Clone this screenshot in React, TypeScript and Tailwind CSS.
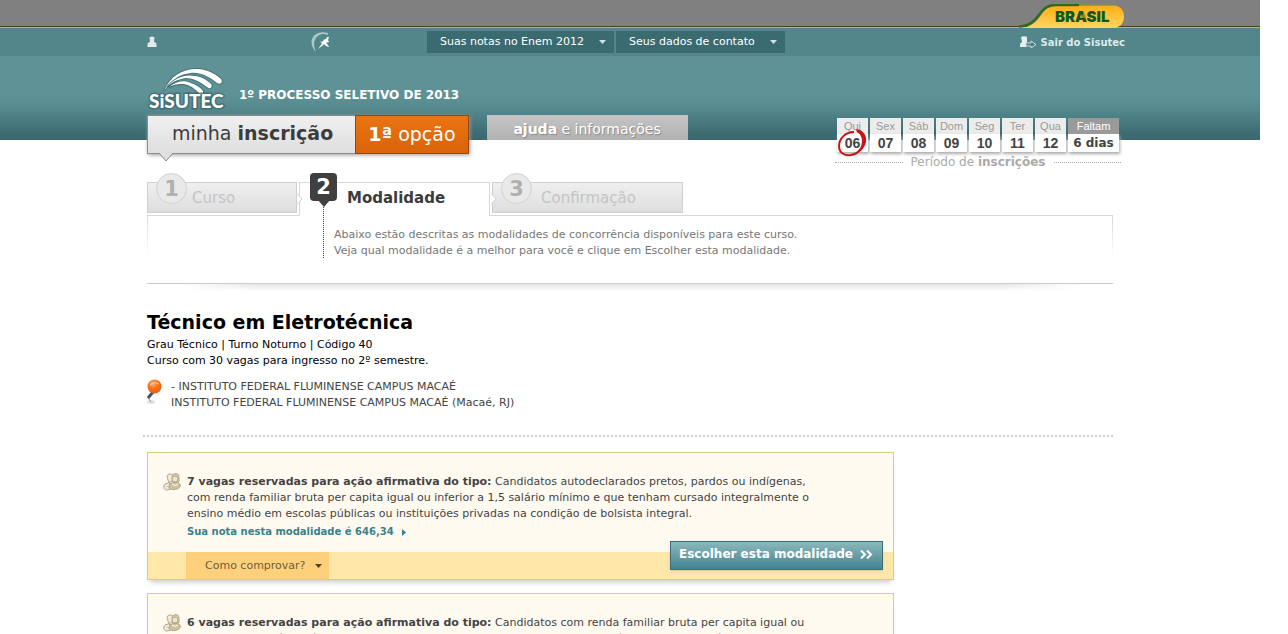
import React from "react";

interface Day {
  week: string;
  day: string;
}

const days: Day[] = [
  { week: "Qui", day: "06" },
  { week: "Sex", day: "07" },
  { week: "Sáb", day: "08" },
  { week: "Dom", day: "09" },
  { week: "Seg", day: "10" },
  { week: "Ter", day: "11" },
  { week: "Qua", day: "12" },
];

interface Modality {
  id: number;
  title: string;
  description: string;
  score: string;
}

const modalities: Modality[] = [
  {
    id: 1,
    title: "7 vagas reservadas para ação afirmativa do tipo:",
    description:
      "Candidatos autodeclarados pretos, pardos ou indígenas, com renda familiar bruta per capita igual ou inferior a 1,5 salário mínimo e que tenham cursado integralmente o ensino médio em escolas públicas ou instituições privadas na condição de bolsista integral.",
    score: "646,34",
  },
  {
    id: 2,
    title: "6 vagas reservadas para ação afirmativa do tipo:",
    description:
      "Candidatos com renda familiar bruta per capita igual ou inferior a 1,5 salário mínimo e que tenham cursado integralmente o ensino médio em escolas públicas ou instituições privadas na condição de bolsista integral.",
    score: "646,34",
  },
];

const BrasilBadge: React.FC = () => (
  <svg width="106" height="24" viewBox="0 0 106 24" aria-label="Brasil" role="img">
    <defs>
      <linearGradient id="badge" x1="0" y1="0" x2="0" y2="1">
        <stop offset="0" stopColor="#ffae12" />
        <stop offset="1" stopColor="#ffd562" />
      </linearGradient>
    </defs>
    <path
      d="M0 24C14 23 18 17 23 10C27 4 31 1.500 37 1.500H94C101 1.500 105 6 105 12.500C105 19 101 24 94 24Z"
      fill="url(#badge)"
    />
    <path d="M0 22.500C12 22 16 16 21 9.500C25 3.500 30 1 37 1H60" fill="none" stroke="#2f6b1c" strokeWidth="2.500" />
    <path d="M60 1H94" stroke="#8a9a1c" strokeWidth="1" />
    <text x="36" y="18" fontSize="15" fontWeight="900" fontFamily="Inter, sans-serif" fill="#0d5a1d">
      BRASIL
    </text>
    <path d="M62 14l3-6 3 6z" fill="#d98b12" fillOpacity="0.7" />
  </svg>
);

const SisutecLogo: React.FC = () => (
  <svg width="80" height="48" viewBox="0 0 80 48" aria-label="SiSUTEC" role="img">
    <g stroke="#2c5357" strokeWidth="2" strokeOpacity="0.5" fill="#ffffff" paintOrder="stroke">
      <path d="M17 24C23 9 36 1 52 2C62 3 70 8 74 12C76 15 74 18 70 16C62 9 52 5 44 6C32 7 23 14 17 24Z" />
      <path d="M20 20C28 11 37 7 48 9C56 10 61 14 64 17C66 20 63 23 60 20C52 14 45 11 39 11C31 12 25 15 20 20Z" />
      <path d="M22 20C30 14 37 13 44 16C50 18 54 21 56 24C57 27 54 28 52 26C45 19 40 17 35 17C29 17 26 18 22 20Z" />
      <text x="2" y="41" fontSize="19" fontWeight="900" fontFamily="Lato, sans-serif" strokeWidth="3">
        SiSUTEC
      </text>
    </g>
  </svg>
);

const UserIcon: React.FC = () => (
  <svg width="10" height="12" viewBox="0 0 10 12" fill="#e3e9ea">
    <path d="M2.500 1.500Q5 -0.500 7.500 1.500L7 6Q9.500 6.500 9.500 8V11H0.500V8Q0.500 6.500 3 6Z" />
  </svg>
);

const RunnerIcon: React.FC = () => (
  <svg width="20" height="22" viewBox="0 0 20 22">
    <path d="M17 2C10 0 5 2 2 6C-1 11 1 17 5 21C3 16 2 11 5 7C8 3 12 2 17 4Z" fill="#a9c8ca" />
    <path d="M12 9L15 8L16 6L18 6L17 9L18 11L15 12L17 14L18 16L15 15L13 13L11 15L7 18L10 14L11 12L9 11L13 10Z" fill="#ffffff" />
  </svg>
);

const ExitIcon: React.FC = () => (
  <svg width="17" height="14" viewBox="0 0 17 14">
    <path d="M1 1Q4 -0.500 7 1V6L6 7V11H0V9Q0 7 2 6Z" fill="#e6eeee" />
    <path d="M6 7h5V5l5 3.500-5 3.500v-2H6z" fill="#4b7f84" stroke="#c9dcdd" strokeWidth="1" />
  </svg>
);

const PinIcon: React.FC = () => (
  <svg width="18" height="28" viewBox="0 0 18 28">
    <defs>
      <radialGradient id="pin" cx="0.4" cy="0.3" r="0.7">
        <stop offset="0" stopColor="#ffb27a" />
        <stop offset="0.5" stopColor="#f9731a" />
        <stop offset="1" stopColor="#e85d08" />
      </radialGradient>
    </defs>
    <ellipse cx="4" cy="23" rx="4" ry="2" fill="#cfcfcf" opacity="0.6" />
    <path d="M6 13L1 19" stroke="#4c5560" strokeWidth="3" />
    <path d="M1 19l3 4" stroke="#8a8f96" strokeWidth="1" />
    <circle cx="7.500" cy="7.500" r="7" fill="url(#pin)" />
    <path d="M3 6Q7 2 12 5" stroke="#ffd0ac" strokeWidth="1" fill="none" />
  </svg>
);

const PeopleIcon: React.FC = () => (
  <svg width="18" height="20" viewBox="0 0 18 20" stroke="#b5a88a" strokeWidth="1">
    <path d="M5 7Q3 2 6 1Q9 0 10 3L9 8L5 10Q1 10 1 14H8Z" fill="#f1ead6" />
    <path d="M9 4Q9 0.500 13 0.500Q16 0.500 16 4L16 9H10Z" fill="#d9ceb2" />
    <path d="M1 12Q0 17 4 17L8 16" fill="#f1ead6" />
    <circle cx="12" cy="6" r="3" fill="#efe6cd" />
    <path d="M6 14Q6 10 10 9.500H14Q17.500 10 17.500 13Q16 16.500 11 16.500Q6 16.500 6 14Z" fill="#cfc2a0" />
    <path d="M9 11Q12 14 15 11" stroke="#fffaf0" fill="none" />
  </svg>
);

const ArrowDown: React.FC<{ className: string }> = ({ className }) => (
  <svg width="7" height="4" viewBox="0 0 7 4" className={className} fill="currentColor">
    <path d="M0 0h7L3.500 4z" />
  </svg>
);

const MenuButton: React.FC<{ label: string }> = ({ label }) => (
  <button type="button" className="flex h-[22px] items-center gap-[15px] bg-[#3a6b70] pr-2 pl-[13px] text-white">
    {label}
    <ArrowDown className="text-[#cfe3e4]" />
  </button>
);

const Calendar: React.FC = () => (
  <div className="relative w-[286px]">
    <table className="w-full table-fixed border-separate border-spacing-x-[2px] border-spacing-y-0 text-center font-['Liberation_Sans',Arial,sans-serif]">
      <thead>
        <tr className="h-4 text-[11px] leading-4 text-[#999]">
          {days.map((d) => (
            <th key={d.day} className="bg-[#ececec] p-0 font-normal">
              {d.week}
            </th>
          ))}
          <th className="w-[51px] bg-[#9a9a9a] p-0 font-normal text-white">Faltam</th>
        </tr>
      </thead>
      <tbody>
        <tr className="h-[18px] text-[14px] leading-[18px] font-bold text-[#444]">
          {days.map((d) => (
            <td key={d.day} className="bg-white p-0 shadow-[1px_2px_3px_#aaa]">
              {d.day}
            </td>
          ))}
          <td className="bg-white p-0 font-['DejaVu_Sans',Verdana,sans-serif] text-[12px] whitespace-nowrap shadow-[1px_2px_3px_#aaa]">
            6 dias
          </td>
        </tr>
      </tbody>
    </table>
    {/* mark on the current day */}
    <svg className="absolute top-2 left-0" width="34" height="32" viewBox="0 0 34 32">
      <path
        d="M19 6C10 6 4 13 4 20C4 27 10 30 16 29C23 28 28 22 28 15C28 10 25 6 22 5"
        fill="none"
        stroke="#cc1418"
        strokeWidth="2"
      />
      <path d="M21 3C29 4 32 10 31 16C30 21 26 26 21 28C26 24 28 20 28 15C28 11 26 7 22 6Z" fill="#cc1418" />
    </svg>
    <p className="flex items-center gap-2 pt-[2px] text-[12px] leading-4 text-[#aaa] before:flex-1 before:border-t before:border-dotted before:border-[#aaa] after:flex-1 after:border-t after:border-dotted after:border-[#aaa]">
      <span>
        Período de <strong>inscrições</strong>
      </span>
    </p>
  </div>
);

const StepNumber: React.FC<{ value: number }> = ({ value }) => (
  <span className="absolute -top-[10px] left-2 flex size-[31px] items-center justify-center rounded-full border border-[#d2d2d2] bg-[#e9e9e9] text-[21px] font-bold text-[#b0b0b0]">
    {value}
  </span>
);

const Steps: React.FC = () => (
  <ol className="flex h-[34px] text-[15px]">
    <li className="w-[153px] border-r border-b border-[#d8d8d8] pr-[2px] pb-[2px]">
      <div className="relative h-full border border-[#d0d0d0] bg-linear-to-b from-[#efefef] to-[#dedede] pl-11 leading-[30px] text-[#c4c4c4]">
        <StepNumber value={1} />
        Curso
        <svg className="absolute top-2.5 -right-[7px]" width="7" height="12" viewBox="0 0 7 12" fill="#fff" stroke="#d0d0d0">
          <path d="M1 0.500L6 6L1 11.500" />
        </svg>
      </div>
    </li>
    <li className="relative w-[189px] border-t border-[#d8d8d8] pl-[47px] leading-[30px] font-bold text-[#3c3c3c]">
      <span className="absolute -top-[10px] left-2.5 flex h-7 w-[27px] items-center justify-center rounded-sm bg-[#3f3f3f] text-[21px] text-white">
        2
      </span>
      {/* pointer and dotted line that goes down to the text */}
      <svg className="absolute top-[17px] left-[17px]" width="14" height="60" viewBox="0 0 14 60">
        <path d="M1 0h12L7 7z" fill="#3f3f3f" />
        <path d="M6.500 7v52" stroke="#3f3f3f" strokeDasharray="1 1" />
      </svg>
      Modalidade
    </li>
    <li className="flex-1 border-b border-l border-[#d8d8d8] pb-[2px] pl-[2px]">
      <div className="relative h-full w-[191px] border border-[#d0d0d0] bg-linear-to-b from-[#efefef] to-[#dedede] pl-12 leading-[30px] text-[#c4c4c4]">
        <svg className="absolute top-2.5 -left-[3px]" width="7" height="12" viewBox="0 0 7 12" fill="#fff" stroke="#d0d0d0">
          <path d="M1 0.500L6 6L1 11.500" />
        </svg>
        <StepNumber value={3} />
        Confirmação
      </div>
    </li>
  </ol>
);

const ModalityCard: React.FC<{ modality: Modality }> = ({ modality }) => (
  <article className="relative mb-[13px] border border-[#d9cc8c] bg-[#fffaf0] shadow-[0_5px_5px_-3px_#c8c8d0]">
    <div className="flex gap-1.5 pt-5 pr-16 pb-3 pl-[15px]">
      <PeopleIcon />
      <div className="flex-1 pt-px">
        <p>
          <strong>{modality.title}</strong> {modality.description}
        </p>
        <a href="#nota" className="mt-0.5 flex items-center gap-2 text-[10px] leading-4 font-bold text-[#37828c]">
          Sua nota nesta modalidade é {modality.score}
          <svg width="4" height="7" viewBox="0 0 4 7" fill="currentColor">
            <path d="M0 0l4 3.500L0 7z" />
          </svg>
        </a>
      </div>
    </div>
    <div className="flex h-[27px] bg-[#ffe6a9] pl-[38px]">
      <button type="button" className="flex items-center gap-2.5 bg-[#ffd07c] pr-[7px] pl-[19px] text-[#6b6036]">
        Como comprovar?
        <ArrowDown className="text-[#4d4520]" />
      </button>
    </div>
    <button
      type="button"
      className="absolute right-2.5 bottom-[9px] flex h-[29px] items-center gap-[7px] border border-[#3c6e77] bg-linear-to-b from-[#8bb8bc] to-[#438491] px-2 pb-1 text-[12px] font-bold text-white shadow-sm"
    >
      Escolher esta modalidade
      <svg width="14" height="9" viewBox="0 0 14 9" className="mt-0.5" fill="none" stroke="#fff" strokeWidth="2">
        <path d="M1 0.500L5 4.500L1 8.500M7 0.500L11 4.500L7 8.500" />
      </svg>
    </button>
  </article>
);

export default function App() {
  return (
    <div className="h-screen overflow-hidden bg-white font-['DejaVu_Sans',Verdana,sans-serif] text-[11px] leading-4 text-[#444]">
      <div className="mr-7">
        {/* Government bar */}
        <div className="border-b border-[#b2c522] bg-[#808080]">
          <div className="border-b border-[#3f4a1c]">
            <div className="mx-auto flex h-[26px] max-w-[990px] justify-end">
              <div className="relative z-10 pt-1">
                <BrasilBadge />
              </div>
            </div>
          </div>
        </div>

        {/* User bar */}
        <div className="bg-[#53868a]">
          <div className="mx-auto flex h-7 max-w-[990px] items-center pl-3">
            <div className="flex w-[164px]">
              <UserIcon />
            </div>
            <div className="w-[116px]">
              <RunnerIcon />
            </div>
            <nav className="flex gap-0.5">
              <MenuButton label="Suas notas no Enem 2012" />
              <MenuButton label="Seus dados de contato" />
            </nav>
            <a href="#sair" className="ml-auto flex items-center gap-1 pt-0.5 text-[10px] font-bold text-[#dcebec]">
              <ExitIcon />
              Sair do Sisutec
            </a>
          </div>
        </div>

        {/* Header */}
        <header className="bg-[linear-gradient(#5f9296,#5f9296_45%,#568a90_62%,#3c6c72_92%,#3a686e)] bg-[length:100%_84px] bg-no-repeat">
          <div className="mx-auto max-w-[990px] pl-3">
            <div className="flex h-[59px] items-end gap-3">
              <SisutecLogo />
              <h1 className="pb-3 text-[12px] font-bold text-white">1º PROCESSO SELETIVO DE 2013</h1>
            </div>
            <div className="flex h-[58px] items-start">
              <div className="relative flex h-[39px] border border-[#8c8c8c] bg-linear-to-b from-[#f0f0f0] to-[#dedede] text-[19px] shadow-[1px_1px_4px_#999]">
                <a href="#inscricao" className="pr-[22px] pl-6 leading-[34px] text-[#3c3c3c]">
                  minha <strong>inscrição</strong>
                </a>
                <a
                  href="#opcao"
                  className="-my-px -mr-px border border-[#8a4a14] bg-linear-to-b from-[#ea7412] to-[#d9640a] px-3 leading-9 text-white"
                >
                  <strong>1ª</strong> opção
                </a>
                <svg className="absolute top-9 left-2.5" width="16" height="11" viewBox="0 0 16 11" fill="#e0e0e0">
                  <path d="M1 1L8 9L15 1" stroke="#8c8c8c" />
                </svg>
              </div>
              <a
                href="#ajuda"
                className="ml-[18px] flex h-[25px] w-[201px] items-center justify-center bg-linear-to-b from-[#c4c4c4] to-[#b2b2b2] pt-0.5 text-[14px] text-white text-shadow-[1px_1px_1px_#888]"
              >
                <span>
                  <strong>ajuda</strong> e informações
                </span>
              </a>
              <div className="ml-auto pt-[3px] pr-1">
                <Calendar />
              </div>
            </div>
          </div>
        </header>

        <main className="mx-auto max-w-[966px] pt-[9px]">
          <Steps />
          <div className="border-x [border-image:linear-gradient(#d8d8d8,#fff_60%,#fff)_1]">
            <p className="pt-[11px] pb-6 pl-[186px] text-[#777]">
              Abaixo estão descritas as modalidades de concorrência disponíveis para este curso.
              <br />
              Veja qual modalidade é a melhor para você e clique em Escolher esta modalidade.
            </p>
          </div>
          <div className="h-2 border-t border-[#ccc]">
            <div className="h-full bg-linear-to-b from-[#e4e4e4] to-white [mask-image:linear-gradient(to_right,transparent_3%,#000_12%,#000_88%,transparent_97%)]" />
          </div>

          {/* Course */}
          <section className="pt-[19px] text-black">
            <h2 className="text-[19px] leading-6 font-bold">Técnico em Eletrotécnica</h2>
            <p className="pt-[3px]">Grau Técnico | Turno Noturno | Código 40</p>
            <p>Curso com 30 vagas para ingresso no 2º semestre.</p>
            <div className="flex gap-1.5 pt-[10px] pb-5 text-[#444]">
              <PinIcon />
              <p>
                - INSTITUTO FEDERAL FLUMINENSE CAMPUS MACAÉ
                <br />
                INSTITUTO FEDERAL FLUMINENSE CAMPUS MACAÉ (Macaé, RJ)
              </p>
            </div>
          </section>
          <hr className="mt-1 mb-[15px] -ml-1 border-t-2 border-dotted border-[#ccc]" />

          {/* Modalities */}
          <section className="max-w-[747px]">
            {modalities.map((m) => (
              <ModalityCard key={m.id} modality={m} />
            ))}
          </section>
        </main>
      </div>
    </div>
  );
}
